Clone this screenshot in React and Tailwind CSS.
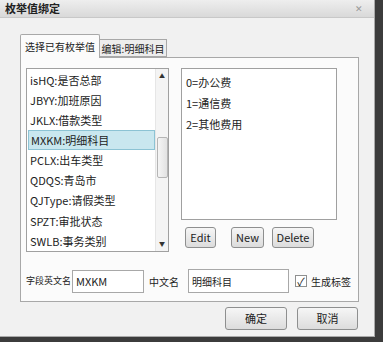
import React from "react";

const font = { fontFamily: '"Noto Sans CJK SC", "Noto Sans", sans-serif' };

const fields = [
  "isHQ:是否总部",
  "JBYY:加班原因",
  "JKLX:借款类型",
  "MXKM:明细科目",
  "PCLX:出车类型",
  "QDQS:青岛市",
  "QJType:请假类型",
  "SPZT:审批状态",
  "SWLB:事务类别",
];

const values = ["0=办公费", "1=通信费", "2=其他费用"];

const SmallButton = ({ children, className = "" }) => (
  <button
    className={`shrink-0 h-[21px] rounded-[3px] border border-[#8e8f8f] bg-gradient-to-b from-[#f6f6f6] to-[#dcdcdc] text-[11px] text-[#222] leading-none whitespace-nowrap ${className}`}
  >
    {children}
  </button>
);

export default function App() {
  return (
    <div className="w-[383px] h-[342px] bg-[#3c3c3c] overflow-hidden" style={font}>
      <div className="w-[375px] h-[337px] flex flex-col bg-[#f1f1f1] border-r border-b border-[#aaaaaa]">
        {/* title bar */}
        <div className="h-[18px] flex items-center justify-between pl-[5px] pr-[11px] bg-gradient-to-b from-[#eeeeee] to-[#d9d9d9] border-b border-[#c8c8c8]">
          <span className="text-[11px] font-bold text-[#222] leading-none">枚举值绑定</span>
          <span className="text-[9px] text-[#999] leading-none">✕</span>
        </div>

        <div className="flex-1 flex flex-col pl-[20px] pr-[15px] pt-[16px]">
          {/* tabs */}
          <div className="flex items-end h-[23px]">
            <div className="shrink-0 w-[80px] h-[24px] -mb-px z-10 flex items-center justify-center bg-[#fbfbfb] border border-b-0 border-[#a8a8a8] rounded-t-[2px] text-[10px] text-[#222] whitespace-nowrap">
              选择已有枚举值
            </div>
            <div className="shrink-0 w-[67px] h-[18px] flex items-center justify-center bg-[#ededed] border border-l-0 border-[#a8a8a8] text-[10px] text-[#222] whitespace-nowrap">
              编辑:明细科目
            </div>
          </div>

          {/* panel */}
          <div className="h-[245px] flex flex-col bg-[#fbfbfb] border border-[#a8a8a8] pl-[5px] pr-[22px] pt-[10px]">
            <div className="flex gap-[12px]">
              {/* left list */}
              <div className="shrink-0 w-[143px] h-[184px] flex bg-white border border-[#a0a0a0]">
                <div className="flex-1 flex flex-col pt-[1px] pl-px">
                  {fields.map((f) => (
                    <div
                      key={f}
                      className={`h-[20.5px] flex items-center pl-[2px] text-[11px] text-[#222] whitespace-nowrap ${
                        f.startsWith("MXKM") ? "bg-[#c9e7ef] border border-[#8cc3d4]" : ""
                      }`}
                    >
                      {f}
                    </div>
                  ))}
                </div>
                <div className="w-[13px] flex flex-col items-center bg-[#f4f4f4] border-l border-[#e6e6e6]">
                  <span className="h-[14px] text-[6px] leading-[14px] text-[#333]">▲</span>
                  <div className="w-[11px] h-[41px] mt-[54px] rounded-[2px] border border-[#b5b5b5] bg-gradient-to-r from-[#f5f5f5] to-[#e2e2e2]" />
                  <span className="mt-auto h-[14px] text-[6px] leading-[14px] text-[#333]">▼</span>
                </div>
              </div>

              {/* right column */}
              <div className="shrink-0 w-[156px] flex flex-col">
                <div className="h-[152px] flex flex-col bg-white border border-[#a0a0a0] pl-[4px] pt-[3px]">
                  {values.map((v) => (
                    <div key={v} className="h-[21px] flex items-center text-[11px] text-[#222]">
                      {v}
                    </div>
                  ))}
                </div>
                <div className="flex items-center mt-[7px] pl-[4px]">
                  <SmallButton className="w-[31px]">Edit</SmallButton>
                  <SmallButton className="w-[33px] ml-[15px]">New</SmallButton>
                  <SmallButton className="w-[42px] ml-[8px]">Delete</SmallButton>
                </div>
              </div>
            </div>

            {/* bottom fields */}
            <div className="flex items-center mt-[17px] text-[10px] text-[#222] whitespace-nowrap">
              <span className="shrink-0 w-[46px] text-[9px]">字段英文名</span>
              <div className="shrink-0 w-[72px] h-[23px] flex items-center pl-[3px] bg-white border border-[#a8a8a8] text-[11px]">
                MXKM
              </div>
              <span className="shrink-0 ml-[5px] w-[34px]">中文名</span>
              <div className="shrink-0 w-[101px] h-[24px] ml-[5px] flex items-center pl-[3px] bg-white border border-[#a8a8a8]">
                明细科目
              </div>
              <div className="shrink-0 ml-[6px] w-[12px] h-[12px] flex items-center justify-center bg-white border border-[#8e8f8f] text-[11px] leading-none">
                ✓
              </div>
              <span className="shrink-0 ml-[4px]">生成标签</span>
            </div>
          </div>

          {/* dialog buttons */}
          <div className="flex justify-end gap-[10px] mt-[5px] pr-[1px]">
            <SmallButton className="w-[62px] h-[23px]">确定</SmallButton>
            <SmallButton className="w-[61px] h-[23px]">取消</SmallButton>
          </div>
        </div>
      </div>
    </div>
  );
}
